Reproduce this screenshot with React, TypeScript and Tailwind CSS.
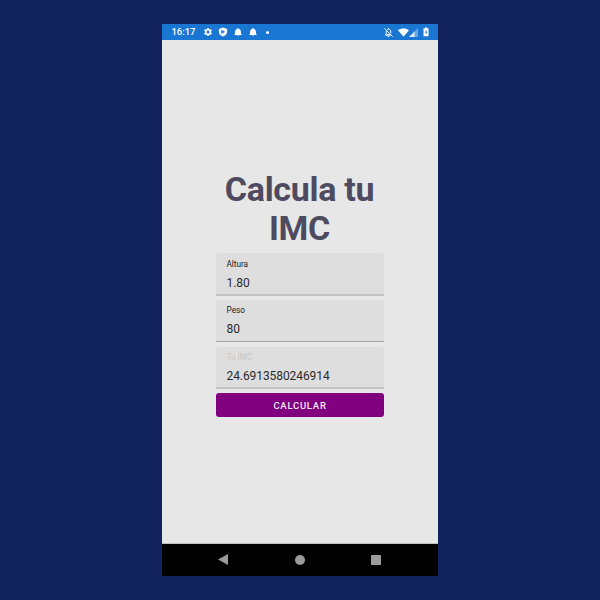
type FieldProps = { label: string; value: string; muted?: boolean; box: string; gap: string };

function Field({ label, value, muted, box, gap }: FieldProps) {
  return (
    <div className={`w-[168px] rounded-t-[3px] bg-[#dedede] px-[10.5px] ${box}`}>
      <div className={`text-[8.3px] leading-[10px] tracking-[-0.05px] ${muted ? "text-[#c8c8c8]" : "text-[#222222]"}`}>{label}</div>
      <div className={`text-[12px] leading-[14px] tracking-[-0.08px] text-[#2a2a2a] ${gap}`}>{value}</div>
    </div>
  );
}

function Bell() {
  return (
    <svg className="h-[10px] w-[10px]" viewBox="0 0 24 24" fill="currentColor">
      <path d="M12 22c1.100 0 2-.9 2-2h-4c0 1.100.9 2 2 2zm7-6v-5c0-3.070-2-5.640-5.200-6.320V4a1.800 1.800 0 0 0-3.600 0v.68C7 5.360 5 7.920 5 11v5l-2 2v1h18v-1l-2-2z" />
    </svg>
  );
}

function StatusBar() {
  return (
    <div className="flex h-4 items-center justify-between bg-[#1976d2] pl-[9.5px] pr-[7.5px] text-white">
      <div className="flex items-center">
        <span className="w-[31px] text-[9.5px] font-medium leading-4 tracking-[-0.05px]">16:17</span>
        <div className="flex items-center gap-[5px]">
          <svg className="h-[10px] w-[10px]" viewBox="0 0 24 24" fill="currentColor">
            <path d="M19.140 12.940c.04-.3.060-.61.060-.94s-.02-.64-.07-.94l2.030-1.580a.49.49 0 0 0 .12-.61l-1.920-3.320a.49.49 0 0 0-.59-.22l-2.390.96a7 7 0 0 0-1.620-.94l-.36-2.540a.48.48 0 0 0-.48-.41h-3.840a.48.48 0 0 0-.47.41l-.36 2.540c-.59.24-1.130.57-1.620.94l-2.390-.96a.48.48 0 0 0-.59.22L2.740 8.870a.47.47 0 0 0 .12.61l2.030 1.580a6 6 0 0 0 0 1.880l-2.030 1.580a.49.49 0 0 0-.12.61l1.920 3.320c.12.22.37.29.59.22l2.390-.96c.5.38 1.030.7 1.620.94l.36 2.540c.05.24.24.41.48.41h3.840c.24 0 .44-.17.47-.41l.36-2.540a7 7 0 0 0 1.620-.94l2.390.96c.22.080.47 0 .59-.22l1.920-3.320a.47.47 0 0 0-.12-.61zM12 15.600a3.600 3.600 0 1 1 0-7.200 3.600 3.600 0 0 1 0 7.200z" />
          </svg>
          <svg className="h-[10px] w-[10px]" viewBox="0 0 24 24" fill="currentColor" fillRule="evenodd">
            <path d="M12 1 2 4.500V11c0 6 4 10.500 10 12 6-1.500 10-6 10-12V4.500zM8 6.500l9 5-9 5z" />
          </svg>
          <Bell />
          <Bell />
          <span className="ml-[3px] h-[3px] w-[3px] rounded-full bg-white" />
        </div>
      </div>
      <div className="flex items-center">
        <svg className="mr-[4px] h-[11px] w-[11px]" viewBox="0 0 24 24" fill="none" stroke="currentColor" strokeWidth="2">
          <path d="M3 3l18 18M7.500 7.500C7 8.500 7 9.500 7 11v6h10M4 17.500h13M9.500 5.700c1-.6 1.700-.7 2.500-.7 3.500 0 5 2.500 5 6v3" />
          <path d="M12 2.500V5M10 20.800h4" />
        </svg>
        <svg className="h-[9px] w-[11px]" viewBox="0 0 22 18" fill="currentColor">
          <path d="M0 4.500C6-.5 16-.5 22 4.500L11 17.500z" />
        </svg>
        <svg className="h-[9px] w-[9px]" viewBox="0 0 16 16" fill="currentColor">
          <path opacity=".35" d="M16 0v16H0z" />
          <path opacity=".75" d="M10 6v10H0z" />
        </svg>
        <svg className="ml-[2.5px] h-[10px] w-[10px]" viewBox="0 0 24 24" fill="currentColor" fillRule="evenodd">
          <path d="M9.500 1h5v2H18v19H6V3h3.500zM13 6.500 9.500 13h2v5.500l3.500-7h-2z" />
        </svg>
      </div>
    </div>
  );
}

function NavBar() {
  return (
    <div className="flex h-8 items-center justify-between bg-black px-[56px] text-[#9b9b9b]">
      <svg className="mb-px h-[11px] w-[10px]" viewBox="0 0 10 11" fill="currentColor">
        <path d="M10 0v11L0 5.500z" />
      </svg>
      <span className="ml-px h-[10px] w-[10px] rounded-full bg-[#9b9b9b]" />
      <span className="mr-px h-[10px] w-[10px] rounded-[0.5px] bg-[#9b9b9b]" />
    </div>
  );
}

export default function App() {
  return (
    <div className="flex h-[600px] w-[600px] justify-center bg-[#12225c] pt-6 font-['Roboto',sans-serif]">
      <div className="flex h-[552px] w-[276px] flex-col bg-[#e7e7e7]">
        <StatusBar />
        <div className="flex flex-1 flex-col items-center border-b border-[#bfc3bf]">
          <h1 className="mt-[130px] h-[79px] w-[168px] pr-px text-center text-[34px] font-bold leading-[39px] tracking-[-0.3px] text-[#4e4a60]">Calcula tu IMC</h1>
          <div className="mt-1 flex flex-col">
            <Field label="Altura" value="1.80" box="h-[43px] border-b-2 border-[#c2c2c2] pt-[5.5px]" gap="mt-[7px]" />
            <Field label="Peso" value="80" box="mt-1 h-[42px] border-b border-[#a6a6a6] pt-[5px]" gap="mt-[7px]" />
            <Field label="Tu IMC" value="24.6913580246914" muted box="mt-[5px] h-[42px] border-b-2 border-[#c2c2c2] pt-[5px]" gap="mt-[7px]" />
            <button className="mt-1 h-6 rounded-[3px] bg-[#800080] pt-px text-[9.5px] font-medium leading-[23px] tracking-[0.75px] text-[#f4e8f4]">CALCULAR</button>
          </div>
        </div>
        <NavBar />
      </div>
    </div>
  );
}
